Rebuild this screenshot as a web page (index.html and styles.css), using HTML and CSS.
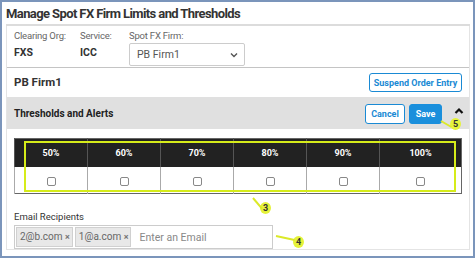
FILE: index.html
```html
<!DOCTYPE html>
<html>
<head>
  <title>Manage Spot FX Firm Limits and Thresholds</title>
  <link rel="stylesheet" href="styles.css">
</head>
<body>
  <div class="frame">
    <h1 class="page-title">Manage Spot FX Firm Limits and Thresholds</h1>
    <div class="panel">
      <div class="filters">
        <div class="field field-org">
          <div class="field-label">Clearing Org:</div>
          <div class="field-value">FXS</div>
        </div>
        <div class="field field-service">
          <div class="field-label">Service:</div>
          <div class="field-value">ICC</div>
        </div>
        <div class="field">
          <div class="field-label">Spot FX Firm:</div>
          <div class="select">
            <span>PB Firm1</span>
            <svg width="8" height="6" viewBox="0 0 8 6"><path d="M1 1.5 L4 4.5 L7 1.5" fill="none" stroke="#555" stroke-width="1.4"/></svg>
          </div>
        </div>
      </div>

      <div class="firm-row">
        <div class="firm-name">PB Firm1</div>
        <button class="btn btn-outline btn-suspend">Suspend Order Entry</button>
      </div>

      <div class="section-head">
        <div class="section-title">Thresholds and Alerts</div>
        <div class="section-actions">
          <button class="btn btn-outline btn-cancel">Cancel</button>
          <button class="btn btn-primary">Save</button>
          <svg class="chevron" width="10" height="8" viewBox="0 0 10 8"><path d="M1.5 6 L5 2.5 L8.5 6" fill="none" stroke="#111" stroke-width="2.2"/></svg>
          <div class="callout callout-5"><span class="tail"></span>5</div>
        </div>
      </div>

      <div class="section-body">
        <div class="table-wrap">
          <table class="thresholds">
            <tr>
              <th>50%</th><th>60%</th><th>70%</th><th>80%</th><th>90%</th><th class="last">100%</th>
            </tr>
            <tr>
              <td><span class="check"></span></td>
              <td><span class="check"></span></td>
              <td><span class="check"></span></td>
              <td><span class="check"></span></td>
              <td><span class="check"></span></td>
              <td><span class="check"></span></td>
            </tr>
          </table>
          <div class="highlight"></div>
          <div class="callout callout-3"><span class="tail"></span>3</div>
        </div>

        <div class="email-label">Email Recipients</div>
        <div class="email-wrap">
          <div class="email-box">
            <span class="tag">2@b.com <b>&#215;</b></span>
            <span class="tag">1@a.com <b>&#215;</b></span>
            <span class="placeholder">Enter an Email</span>
          </div>
          <div class="callout callout-4"><span class="tail"></span>4</div>
        </div>
      </div>
    </div>
  </div>
</body>
</html>
```

FILE: styles.css
```css
* {
  box-sizing: border-box;
}
body {
  margin: 0;
  font-family: Roboto, "Liberation Sans", Arial, sans-serif;
  color: #333;
  background: #fff;
}
.frame {
  width: 475px;
  height: 258px;
  border: 2px solid #7b95bb;
  padding: 0 3px 0 4px;
  overflow: hidden;
}
.page-title {
  margin: 0;
  padding: 4px 0 0 0;
  height: 24px;
  font-size: 13px;
  font-weight: bold;
  color: #333;
  letter-spacing: -0.6px;
  border-bottom: 2px solid #dcdcdc;
}
.panel {
  border: 1px solid #e4e4e4;
  border-top: none;
  height: 224px;
}
.filters {
  display: flex;
  padding: 4px 0 0 7px;
  height: 42px;
  border-bottom: 1px solid #c4c4c4;
}
.field-org {
  width: 66px;
}
.field-service {
  width: 49px;
}
.field-label {
  font-size: 9.5px;
  color: #666;
  line-height: 12px;
  letter-spacing: -0.2px;
}
.field-value {
  font-size: 10.5px;
  font-weight: bold;
  color: #333;
  margin-top: 4px;
}
.select {
  margin-top: 1px;
  width: 116px;
  height: 23px;
  border: 1px solid #ccc;
  border-radius: 2px;
  display: flex;
  align-items: center;
  justify-content: space-between;
  padding: 0 6px 0 7px;
  font-size: 10.5px;
  color: #555;
}
.firm-row {
  display: flex;
  justify-content: space-between;
  align-items: center;
  padding: 3px 7px 0 7px;
  height: 28px;
}
.firm-name {
  font-size: 11.5px;
  font-weight: bold;
  color: #333;
  margin-top: -3px;
}
.btn {
  font-family: Roboto, "Liberation Sans", Arial, sans-serif;
  font-size: 9px;
  font-weight: bold;
  border-radius: 3px;
  height: 20px;
  padding: 0 6px;
  cursor: pointer;
}
.btn-outline {
  background: #fff;
  color: #1a8ad4;
  border: 1.5px solid #1a8ad4;
}
.btn-suspend {
  width: 93px;
  padding: 0;
  height: 19px;
  margin-top: -2px;
}
.btn-primary {
  background: #1a8fdc;
  color: #fff;
  border: 1.5px solid #1a8fdc;
  width: 33px;
  padding: 0;
}
.btn-cancel {
  width: 40px;
  padding: 0;
}
.section-head {
  display: flex;
  justify-content: space-between;
  align-items: center;
  background: #e0e0e0;
  height: 32px;
  margin-top: 1px;
  padding: 0 5px 0 7px;
}
.section-title {
  font-size: 10px;
  font-weight: bold;
  color: #222;
}
.section-actions {
  display: flex;
  align-items: center;
  gap: 4px;
  position: relative;
  margin-top: 2px;
}
.chevron {
  margin-left: 8px;
  margin-top: -6px;
}
.section-body {
  padding: 9px 7px 0 7px;
}
.table-wrap {
  position: relative;
}
.thresholds {
  width: 448px;
  border-collapse: collapse;
  table-layout: fixed;
  border: 1px solid #666;
}
.thresholds th {
  width: 73px;
  background: #222;
  color: #fff;
  font-size: 9px;
  font-weight: bold;
  height: 28px;
  border-left: 1px solid #555;
  text-align: center;
}
.thresholds th.last {
  width: auto;
}
.thresholds td {
  height: 27px;
  text-align: center;
  border-left: 1px solid #aaa;
  background: #fff;
}
.check {
  display: inline-block;
  width: 9px;
  height: 9px;
  border: 1px solid #888;
  border-radius: 2px;
  vertical-align: middle;
}
.highlight {
  position: absolute;
  left: 10px;
  top: 3px;
  width: 432px;
  height: 51px;
  border: 2px solid #d6ec1a;
}
.callout {
  position: absolute;
  width: 11px;
  height: 12px;
  border-radius: 50%;
  background: #e5f23a;
  color: #333;
  font-size: 9px;
  font-weight: bold;
  text-align: center;
  line-height: 12px;
}
.tail {
  position: absolute;
  height: 2px;
  background: #dbe928;
  transform-origin: left center;
}
.callout-5 {
  left: 85px;
  top: 14px;
}
.callout-5 .tail {
  width: 12px;
  left: -9px;
  top: 2px;
  transform: rotate(30deg);
}
.callout-3 {
  left: 246px;
  top: 64px;
}
.callout-3 .tail {
  width: 14px;
  left: -7px;
  top: -5px;
  transform: rotate(50deg);
}
.email-label {
  font-size: 9.5px;
  color: #333;
  margin-top: 17px;
}
.email-wrap {
  position: relative;
  margin-top: 3px;
}
.email-box {
  width: 259px;
  height: 24px;
  border: 1px solid #ccc;
  display: flex;
  align-items: center;
  padding: 0 1px;
  gap: 2px;
}
.tag {
  background: #e8e8e8;
  border: 1px solid #d0d0d0;
  height: 20px;
  line-height: 18px;
  padding: 0 2px 0 3px;
  font-size: 10px;
  color: #666;
}
.tag b {
  font-size: 9px;
  color: #777;
}
.placeholder {
  font-size: 10.5px;
  color: #888;
  margin-left: 6px;
}
.callout-4 {
  left: 279px;
  top: 11px;
}
.callout-4 .tail {
  width: 19px;
  left: -17px;
  top: -1px;
  transform: rotate(12deg);
}
```
